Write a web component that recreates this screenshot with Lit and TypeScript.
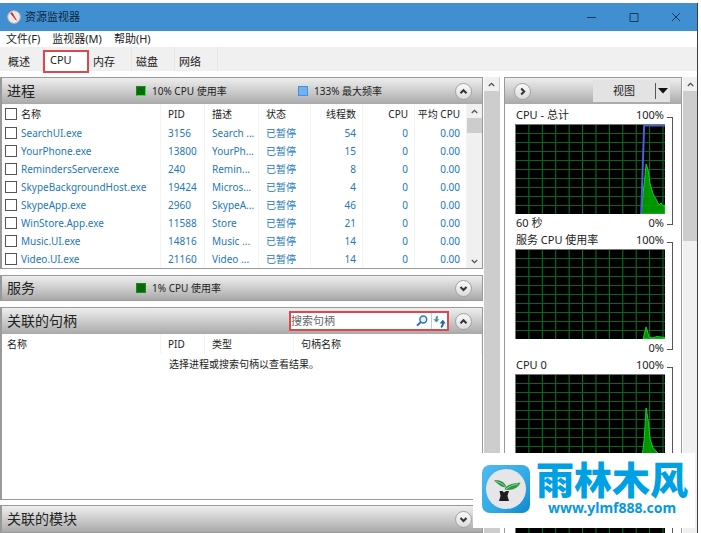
import { LitElement, html, css, svg, nothing } from "lit";
import { customElement, property } from "lit/decorators.js";

const FONT = css`"Noto Sans", "Noto Sans CJK SC", sans-serif`;

interface Proc {
  name: string;
  pid: string;
  desc: string;
  threads: number;
}

const PROCS: Proc[] = [
  { name: "SearchUI.exe", pid: "3156", desc: "Search ...", threads: 54 },
  { name: "YourPhone.exe", pid: "13800", desc: "YourPh...", threads: 15 },
  { name: "RemindersServer.exe", pid: "240", desc: "Remin...", threads: 8 },
  { name: "SkypeBackgroundHost.exe", pid: "19424", desc: "Micros...", threads: 4 },
  { name: "SkypeApp.exe", pid: "2960", desc: "SkypeA...", threads: 46 },
  { name: "WinStore.App.exe", pid: "11588", desc: "Store", threads: 21 },
  { name: "Music.UI.exe", pid: "14816", desc: "Music ...", threads: 14 },
  { name: "Video.UI.exe", pid: "21160", desc: "Video ...", threads: 14 },
];

/** Round expand / collapse button used in panel headers. */
@customElement("round-toggle")
class RoundToggle extends LitElement {
  @property() dir = "up";
  @property() label = "";
  static styles = css`
    :host { display: block; flex: none; }
    button {
      display: grid;
      place-items: center;
      width: 17px;
      height: 17px;
      padding: 0;
      border: 1px solid #a2a2a2;
      border-radius: 50%;
      background: linear-gradient(#fafafa, #dcdcdc);
    }
  `;
  render() {
    const d =
      this.dir === "up" ? "M1.5 6.2 4.5 3.2 7.5 6.2"
      : this.dir === "down" ? "M1.5 3 4.5 6 7.5 3"
      : "M3.2 1.5 6.2 4.5 3.2 7.5";
    return html`<button aria-label=${this.label}>
      <svg width="9" height="9" viewBox="0 0 9 9">
        <path d=${d} fill="none" stroke="#333" stroke-width="2" />
      </svg>
    </button>`;
  }
}

/** Vertical scroll bar with arrows and a thumb. */
@customElement("scroll-strip")
class ScrollStrip extends LitElement {
  @property({ type: Boolean }) end = false;
  static styles = css`
    :host { display: flex; flex-direction: column; background: #f0f0f0; overflow: hidden; }
    .arrow { flex: none; height: 14px; display: grid; place-items: center; }
    .thumb { flex: 0 1 var(--thumb, 100%); background: #cdcdcd; }
    .end { margin-top: auto; }
  `;
  render() {
    return html`
      <div class="arrow">
        <svg width="7" height="5" viewBox="0 0 7 5"><path d="M.8 4 3.5 1.3 6.2 4" fill="none" stroke="#505050" stroke-width="1.3" /></svg>
      </div>
      <div class="thumb"></div>
      ${this.end
        ? html`<div class="arrow end">
            <svg width="7" height="5" viewBox="0 0 7 5"><path d="M.8 1 3.5 3.7 6.2 1" fill="none" stroke="#505050" stroke-width="1.3" /></svg>
          </div>`
        : nothing}
    `;
  }
}

/** Usage chart with its caption, scale and bracket. */
@customElement("usage-chart")
class UsageChart extends LitElement {
  @property() caption = "";
  @property() span = "";
  @property() high = "";
  @property() low = "";
  @property() area = "";
  @property() limit = "";
  static styles = css`
    :host {
      display: grid;
      grid-template-columns: 1fr 6px;
      column-gap: 2px;
      font: 11px/15px ${FONT};
      color: #222;
    }
    .row { display: flex; justify-content: space-between; padding: 0 1px; }
    .top { height: 17px; }
    .bottom { height: 18px; line-height: 18px; }
    svg { display: block; width: 100%; height: 90px; background: #000; }
    .bracket {
      grid-column: 2;
      grid-row: 1;
      margin: 10px 0 7px;
      border: 1px solid #555;
      border-left: 0;
    }
  `;
  render() {
    const cols = Array.from({ length: 11 }, (_, i) => 13.5 * (i + 1) + 0.5);
    const rows = Array.from({ length: 9 }, (_, i) => 9 * (i + 1) + 0.5);
    return html`
      <div>
        <div class="row top"><span>${this.caption}</span><span>${this.high}</span></div>
        <svg viewBox="0 0 151 90" preserveAspectRatio="none" aria-hidden="true">
          ${cols.map((x) => svg`<path d="M${x} 0V90" stroke="#0c7a28" stroke-width="1"/>`)}
          ${rows.map((y) => svg`<path d="M0 ${y}H151" stroke="#0a641f" stroke-width="1"/>`)}
          <path d=${this.area} fill="#00a400" fill-opacity=".9" stroke="#16d026" />
          ${this.limit ? svg`<path d=${this.limit} fill="none" stroke="#4a5fd8" stroke-width="2"/>` : nothing}
          <path d="M0 .5H151M.5 0V90" stroke="#777" fill="none" />
        </svg>
        <div class="row bottom"><span>${this.span}</span><span>${this.low}</span></div>
      </div>
      <div class="bracket"></div>
    `;
  }
}

@customElement("app-root")
class AppRoot extends LitElement {
  static styles = css`
    :host {
      display: flex;
      flex-direction: column;
      position: relative;
      box-sizing: border-box;
      height: 100vh;
      padding: 3px 3px 0 0;
      overflow: hidden;
      background: #fff;
      color: #222;
      font: 11px/16px ${FONT};
    }
    * { box-sizing: border-box; }
    button, input { font: inherit; color: inherit; }
    button { background: none; border: 0; padding: 0; }

    .window {
      flex: 1;
      min-height: 0;
      display: flex;
      flex-direction: column;
      border-right: 1px solid #3a3f45;
    }
    .title {
      flex: none;
      display: flex;
      align-items: center;
      height: 28px;
      padding-left: 7px;
      background: #408fd0;
      color: #10243a;
    }
    .title h1 { margin: 0 auto 0 4px; font: inherit; }
    .title button { width: 42px; height: 28px; display: grid; place-items: center; color: #163a5c; }

    .menu { flex: none; display: flex; gap: 12px; height: 16px; padding-left: 6px; }
    .menu button { line-height: 16px; }
    .tabs {
      flex: none;
      display: flex;
      height: 24px;
      margin-bottom: 6px;
      background: #f0f0f0;
    }
    .tabs button { width: 43px; padding: 6px 0 0 4px; text-align: left; border-right: 1px solid #e6e6e6; }
    .tabs button:first-child { padding-left: 8px; }
    .tabs .active {
      width: 46px;
      height: 23px;
      margin-top: 3px;
      padding: 0 0 3px 5px;
      border: 2px solid #e0474c;
      background: #fff;
    }

    .body { flex: 1; min-height: 0; display: flex; }
    .left { flex: 1; min-width: 0; display: flex; flex-direction: column; gap: 6px; overflow: hidden; }
    .panel { flex: none; border: 1px solid #999; border-left-width: 2px; background: #fff; }
    .head {
      display: flex;
      align-items: center;
      height: 26px;
      padding: 0 9px 0 5px;
      background: linear-gradient(#eee, #c9c9c9 55%, #a9a9a9);
    }
    .panel .head { padding-right: 10px; }
    .panel:not(.open) .head { height: 24px; }
    .head h2 { flex: 0 0 129px; margin: 0; font: 14px/20px ${FONT}; white-space: nowrap; }
    .stat { flex: 0 0 162px; display: flex; align-items: center; gap: 6px; font-size: 10px; white-space: nowrap; }
    .stat + .stat { flex: none; }
    .chip { width: 10px; height: 10px; background: #0a6a0a; border: 1px solid #1d8a1d; }
    .chip.hot { border-bottom-color: #3fdc3f; border-right-color: #3fdc3f; }
    .chip.blue { background: #6fb1f5; border-color: #4a90d9; }
    .head round-toggle { margin-left: auto; }

    .content { display: flex; }
    table {
      flex: 1;
      min-width: 0;
      table-layout: fixed;
      border-collapse: collapse;
      font: 10px/17px ${FONT};
    }
    th, td {
      height: 18px;
      padding: 0 0 0 7px;
      text-align: left;
      font-weight: 400;
      white-space: nowrap;
      overflow: hidden;
      border-right: 1px solid #f4f4f4;
    }
    th { height: 20px; }
    td { color: #2478b8; }
    th:first-child, td:first-child { padding-left: 3px; }
    .num { padding: 0 6px 0 0; text-align: right; }
    .pid { width: 44px; }
    .desc { width: 54px; }
    .n { width: 52px; }
    label { display: flex; align-items: center; gap: 4px; }
    input[type="checkbox"] {
      appearance: none;
      flex: none;
      width: 12px;
      height: 12px;
      margin: 0;
      border: 1px solid #555;
      background: #fff;
    }
    .inner { width: 15px; --thumb: 15px; }

    .search {
      display: flex;
      align-items: center;
      width: 160px;
      height: 20px;
      margin-left: auto;
      border: 2px solid #e0474c;
      background: #fff;
    }
    .search input {
      flex: 1;
      min-width: 0;
      height: 16px;
      padding: 0;
      border: 0;
      outline: 0;
      background: none;
    }
    .search input::placeholder { color: #666; opacity: 1; }
    .search button { width: 18px; height: 16px; display: grid; place-items: center; }
    .search button + button { width: 16px; border-left: 1px solid #ccc; }
    .head .search + round-toggle { margin-left: 6px; }
    .handles .content { flex-direction: column; height: 165px; }
    .handles table { flex: none; width: 100%; }
    .handles th:first-child { padding-left: 5px; }
    .handles .type { width: 89px; }
    .handles .hname { width: 188px; }
    .handles th { height: 20px; }
    .hint { margin: 0; padding-left: 167px; font: 10px/20px ${FONT}; }
    .modules { margin-top: -1px; }

    .outer { flex: none; width: 16px; margin: 0 4px 0 1px; border-right: 1px solid #ccc; --thumb: 100%; }
    .side {
      flex: none;
      width: 178px;
      border: 1px solid #999;
      border-bottom: 0;
      overflow: hidden;
    }
    .side .head { padding-right: 11px; padding-left: 9px; }
    .side round-toggle { margin: 0; }
    .view { display: flex; align-items: center; height: 22px; margin-left: auto; background: #e3e3e3; }
    .view button { height: 16px; }
    .view .main { width: 62px; }
    .view .drop { width: 15px; border-left: 1px solid #555; display: grid; place-items: center; }
    .charts { padding: 3px 8px 0 10px; }
    .edge { flex: none; width: 14px; margin-left: 1px; --thumb: 150px; }

    .mark {
      position: absolute;
      right: 6px;
      bottom: 5px;
      display: flex;
      align-items: center;
      gap: 6px;
      width: 222px;
      height: 75px;
      padding: 0 0 4px 9px;
      background: #fff;
      color: #00a0e4;
    }
    .mark svg { flex: none; }
    .mark div { display: flex; flex-direction: column; align-items: center; gap: 4px; padding-bottom: 4px; }
    .mark strong { font: 900 38px/38px "Noto Sans CJK SC", sans-serif; white-space: nowrap; }
    .mark a { color: #0a98dc; text-decoration: none; font: 700 14px/14px ${FONT}; }
  `;

  render() {
    return html`
      <div class="window">
        <header class="title">
          <svg width="14" height="14" viewBox="0 0 14 14">
            <circle cx="7" cy="7" r="6.3" fill="#ece9e6" stroke="#b9b3ae" />
            <path d="M3.6 3.2 5.2 2.8 9.3 10.2Z" fill="#c8322c" stroke="#c8322c" stroke-width=".8" />
          </svg>
          <h1>资源监视器</h1>
          <button aria-label="最小化"><svg width="10" height="10"><path d="M0 5.5H9" stroke="currentColor" /></svg></button>
          <button aria-label="最大化"><svg width="10" height="10"><path d="M1 1.5H9V9.5H1Z" fill="none" stroke="currentColor" /></svg></button>
          <button aria-label="关闭"><svg width="10" height="10"><path d="M1 1 9 9M9 1 1 9" stroke="currentColor" /></svg></button>
        </header>
        <nav class="menu">
          <button>文件(F)</button><button>监视器(M)</button><button>帮助(H)</button>
        </nav>
        <nav class="tabs">
          <button>概述</button><button class="active">CPU</button><button>内存</button><button>磁盘</button><button>网络</button>
        </nav>

        <div class="body">
          <main class="left">
            <section class="panel open">
              <div class="head">
                <h2>进程</h2>
                <span class="stat"><i class="chip hot"></i>10% CPU 使用率</span>
                <span class="stat"><i class="chip blue"></i>133% 最大频率</span>
                <round-toggle dir="up" label="折叠"></round-toggle>
              </div>
              <div class="content">
                <table>
                  <thead>
                    <tr>
                      <th><label><input type="checkbox" />名称</label></th>
                      <th class="pid">PID</th>
                      <th class="desc">描述</th>
                      <th class="n">状态</th>
                      <th class="n num">线程数</th>
                      <th class="n num">CPU</th>
                      <th class="n num">平均 CPU</th>
                    </tr>
                  </thead>
                  <tbody>
                    ${PROCS.map(
                      (p) => html`<tr>
                        <td><label><input type="checkbox" />${p.name}</label></td>
                        <td>${p.pid}</td>
                        <td>${p.desc}</td>
                        <td>已暂停</td>
                        <td class="num">${p.threads}</td>
                        <td class="num">0</td>
                        <td class="num">0.00</td>
                      </tr>`
                    )}
                  </tbody>
                </table>
                <scroll-strip class="inner" end></scroll-strip>
              </div>
            </section>

            <section class="panel">
              <div class="head">
                <h2>服务</h2>
                <span class="stat"><i class="chip"></i>1% CPU 使用率</span>
                <round-toggle dir="down" label="展开"></round-toggle>
              </div>
            </section>

            <section class="panel handles open">
              <div class="head">
                <h2>关联的句柄</h2>
                <div class="search">
                  <input type="text" placeholder="搜索句柄" aria-label="搜索句柄" />
                  <button aria-label="搜索">
                    <svg width="12" height="12" viewBox="0 0 12 12">
                      <circle cx="7.3" cy="4.5" r="3.4" fill="#e6f3ff" stroke="#2f78b4" stroke-width="1.5" />
                      <path d="M4.8 7 1 10.8" stroke="#2f78b4" stroke-width="2" />
                    </svg>
                  </button>
                  <button aria-label="刷新">
                    <svg width="13" height="13" viewBox="0 0 13 13">
                      <path d="M4.6 1.2C3.6 2 3.4 3 3.4 5" fill="none" stroke="#3a93b8" stroke-width="2" />
                      <path d="M.4 4.2H6.4L3.4 7.6Z" fill="#3a93b8" />
                      <path d="M8 12.2c1.6-.8 2-2.2 2-4.2" fill="none" stroke="#2463a8" stroke-width="2" />
                      <path d="M6.6 8.4h6.2L9.8 4.8Z" fill="#2463a8" />
                    </svg>
                  </button>
                </div>
                <round-toggle dir="up" label="折叠"></round-toggle>
              </div>
              <div class="content">
                <table>
                  <thead>
                    <tr>
                      <th>名称</th>
                      <th class="pid">PID</th>
                      <th class="type">类型</th>
                      <th class="hname">句柄名称</th>
                    </tr>
                  </thead>
                </table>
                <p class="hint">选择进程或搜索句柄以查看结果。</p>
              </div>
            </section>

            <section class="panel modules open">
              <div class="head">
                <h2>关联的模块</h2>
                <round-toggle dir="down" label="展开"></round-toggle>
              </div>
            </section>
          </main>
          <scroll-strip class="outer"></scroll-strip>

          <aside class="side">
            <div class="head">
              <round-toggle dir="right" label="隐藏图表"></round-toggle>
              <div class="view">
                <button class="main">视图</button>
                <button class="drop" aria-label="视图选项">
                  <svg width="10" height="6"><path d="M0 0H10L5 5.5Z" fill="#111" /></svg>
                </button>
              </div>
            </div>
            <div class="charts">
              <usage-chart
                caption="CPU - 总计"
                span="60 秒"
                high="100%"
                low="0%"
                limit="M127 90 130 1.5H151"
                area="M127 90 129 70 132 40 134 46 136 60 139 70 143 77 145 81 147 79 149 82 151 81V90Z"
              ></usage-chart>
              <usage-chart
                caption="服务 CPU 使用率"
                high="100%"
                low="0%"
                area="M129 90 132 78 135 88 138 89 143 87.5 151 88.5V90Z"
              ></usage-chart>
              <usage-chart
                caption="CPU 0"
                high="100%"
                area="M127 90 130 66 132 34 134 46 136 65 139 74 145 80 151 83V90Z"
              ></usage-chart>
              <usage-chart area="M127 90 132 50 136 75 151 86V90Z"></usage-chart>
            </div>
          </aside>
          <scroll-strip class="edge"></scroll-strip>
        </div>
      </div>

      <div class="mark">
        <svg width="48" height="48" viewBox="0 0 48 48">
          <defs>
            <linearGradient id="tile" x1="0" y1="0" x2="1" y2="1">
              <stop offset="0" stop-color="#4fbbee" />
              <stop offset=".6" stop-color="#2fa9e4" />
              <stop offset="1" stop-color="#0d86cc" />
            </linearGradient>
          </defs>
          <rect width="48" height="48" rx="8" fill="url(#tile)" />
          <circle cx="24" cy="24" r="20" fill="#e6e6e8" />
          <path d="M12 15.5C17 14.5 23 16 24.5 22.5 19 22.5 16 19 12 15.5Z" fill="#2c9440" />
          <path d="M38.5 17.5C36 23.5 30 26 22.5 24.5 24.5 19 31 18.5 38.5 17.5Z" fill="#2f9a3e" />
          <path d="M14.5 16.5q6 1.5 9 5.5M36 18.8q-7 1-12 5" stroke="#a8dfae" stroke-width=".8" fill="none" />
          <path d="M17.5 26h3l1.5 1.5L24 26h3l-1 3-.5 2L27 36H17l1.5-5-.3-2Z" fill="#1c1c22" />
        </svg>
        <div><strong>雨林木风</strong><a href="#">www.ylmf888.com</a></div>
      </div>
    `;
  }
}
